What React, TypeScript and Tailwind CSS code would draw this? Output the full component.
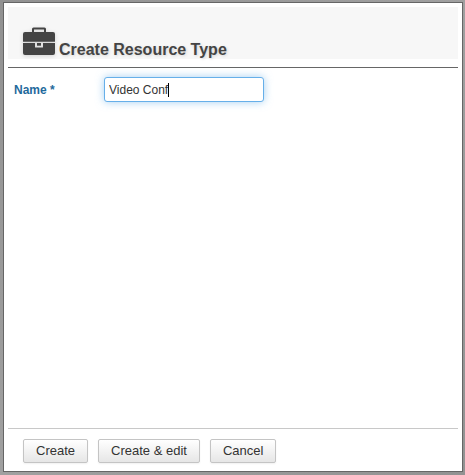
import { useState } from "react";
import type { ButtonHTMLAttributes } from "react";

function BriefcaseIcon() {
  return (
    <svg
      className="h-7 w-8 shrink-0 drop-shadow-[0_1px_2px_rgba(0,0,0,0.15)]"
      viewBox="0 0 32 28"
      fill="#444444"
      aria-hidden="true"
    >
      <path
        fillRule="evenodd"
        d="M9 5V2Q9 .5 10.500 .5H21.500Q23 .5 23 2V5H30Q32 5 32 7V14.700H0V7Q0 5 2 5ZM11 5H21V2.500H11Z"
      />
      <path
        fillRule="evenodd"
        d="M0 16H12V20Q12 20.500 12.500 20.500H19.500Q20 20.500 20 20V16H32V26Q32 28 30 28H2Q0 28 0 26Z"
      />
      <path d="M14 16H18V18.700H14Z" />
    </svg>
  );
}

function DialogButton(props: ButtonHTMLAttributes<HTMLButtonElement>) {
  return (
    <button
      type="button"
      className="h-6 rounded-xs border border-[#c4c4c4] bg-linear-to-b from-white to-[#e6e6e6] px-3 text-[13px] leading-5 text-[#333333] shadow-[0_1px_2px_rgba(0,0,0,0.06)]"
      {...props}
    />
  );
}

export default function App() {
  const [name, setName] = useState("Video Conf");

  return (
    <div className="flex min-h-screen bg-linear-to-br from-[#929292] via-[#a0a0a0] to-[#929292] pt-[2px] pr-[2px] pb-[3px] pl-[3px] font-['Liberation_Sans',Arial,sans-serif] text-[#333333]">
      <form
        className="flex flex-1 flex-col border border-[#666666] bg-white p-1"
        onSubmit={(event) => event.preventDefault()}
      >
        <header className="border-b border-[#666666] pb-2">
          <div className="flex h-[52px] items-end gap-1 bg-[#f7f7f7] pl-[15px]">
            <div className="pb-1">
              <BriefcaseIcon />
            </div>
            <h1 className="text-base leading-[18px] font-bold text-[#444444] [text-shadow:1px_1px_3px_rgba(0,0,0,0.15)]">
              Create Resource Type
            </h1>
          </div>
        </header>

        <main className="flex flex-1 items-start pt-[9px] pl-[6px]">
          <label
            htmlFor="resource-name"
            className="w-[90px] text-[12px] leading-[26px] font-bold text-[#1f6a9c]"
          >
            Name *
          </label>
          <div className="relative">
            <input
              id="resource-name"
              type="text"
              value={name}
              onChange={(event) => setName(event.target.value)}
              className="block h-[25px] w-40 rounded-[3px] border border-[#66afe9] bg-white px-1 text-[12px] text-[#333333] caret-transparent shadow-[0_0_8px_rgba(102,175,233,0.6)] outline-none"
            />
            <span
              className="pointer-events-none absolute inset-y-0 left-[5px] flex items-center text-[12px]"
              aria-hidden="true"
            >
              <span className="invisible whitespace-pre">{name}</span>
              <span className="h-[14px] w-px bg-black" />
            </span>
          </div>
        </main>

        <footer className="flex gap-[10px] border-t border-[#c8c8c8] pt-[10px] pb-1 pl-[15px]">
          <DialogButton>Create</DialogButton>
          <DialogButton>Create &amp; edit</DialogButton>
          <DialogButton>Cancel</DialogButton>
        </footer>
      </form>
    </div>
  );
}
